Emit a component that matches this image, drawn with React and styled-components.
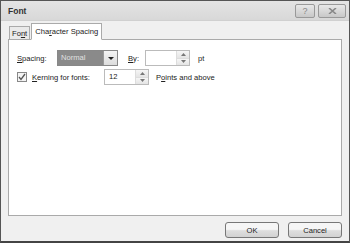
import React from 'react';
import styled, { createGlobalStyle } from 'styled-components';

const Global = createGlobalStyle`
  html, body { margin: 0; padding: 0; background: #fff; }
  body { font-family: "Liberation Sans", Arial, sans-serif; font-size: 7.6px; color: #222; }
`;

const Dialog = styled.div`
  width: 350px;
  height: 243px;
  box-sizing: border-box;
  border: 1px solid #555;
  border-bottom: 2px solid #444;
  background: #f0f0f0;
  display: flex;
  flex-direction: column;
`;

const TitleBar = styled.div`
  height: 19px;
  display: flex;
  align-items: center;
  justify-content: space-between;
  padding: 0 3px 0 7px;
  background: linear-gradient(#e4e4e4, #d8d8d8);
  border-bottom: 1px solid #d0d0d0;
`;

const Title = styled.span`
  font-weight: bold;
  font-size: 8.5px;
  color: #333;
`;

const TitleButtons = styled.div`
  display: flex;
  gap: 3px;
`;

const CapButton = styled.div`
  width: ${p => p.$w}px;
  height: 12px;
  border: 1px solid #999;
  border-radius: 2px;
  background: linear-gradient(#e8e8e8, #c8c8c8);
  display: flex;
  align-items: center;
  justify-content: center;
  font-size: 9px;
  color: #888;
`;

const Body = styled.div`
  flex: 1;
  display: flex;
  flex-direction: column;
  padding: 2px 7px 0 7px;
`;

const Tabs = styled.div`
  display: flex;
  align-items: flex-end;
  height: 17px;
  position: relative;
  z-index: 1;
  margin-bottom: -1px;
`;

const Tab = styled.div`
  box-sizing: border-box;
  padding: ${p => (p.$active ? '0 3px' : '0 2px')};
  height: ${p => (p.$active ? '17px' : '14px')};
  line-height: ${p => (p.$active ? '16px' : '13px')};
  border: 1px solid #aaa;
  border-bottom: ${p => (p.$active ? '1px solid #fff' : '1px solid #aaa')};
  background: ${p => (p.$active ? '#fff' : '#eaeaea')};
  margin-left: ${p => (p.$active ? '-1px' : '1px')};
  margin-right: ${p => (p.$active ? '0' : '2px')};
`;

const Panel = styled.div`
  height: 177px;
  box-sizing: border-box;
  background: #fff;
  border: 1px solid #aaa;
  padding: 10px 9px 10px 8px;
  display: flex;
  flex-direction: column;
  gap: 3px;
`;

const Row = styled.div`
  display: flex;
  align-items: center;
  height: 16px;
`;

const Label = styled.span`
  width: ${p => (p.$w ? `${p.$w}px` : 'auto')};
  margin-left: ${p => p.$ml || 0}px;
  flex-shrink: 0;
`;

const Select = styled.div`
  width: 61px;
  height: 16px;
  box-sizing: border-box;
  border: 1px solid #888;
  display: flex;
  background: #8a8a8a;
`;

const SelectText = styled.div`
  flex: 1;
  color: #e0e0e0;
  padding-left: 3px;
  line-height: 14px;
`;

const DropButton = styled.div`
  width: 13px;
  background: linear-gradient(#f4f4f4, #dcdcdc);
  border-left: 1px solid #999;
  display: flex;
  align-items: center;
  justify-content: center;
`;

const Spin = styled.div`
  width: ${p => p.$w}px;
  height: 16px;
  box-sizing: border-box;
  border: 1px solid #bbb;
  display: flex;
  margin-left: ${p => p.$ml || 0}px;
`;

const SpinText = styled.div`
  flex: 1;
  padding-left: 4px;
  line-height: 14px;
`;

const SpinArrows = styled.div`
  width: 12px;
  display: flex;
  flex-direction: column;
  border-left: 1px solid #ddd;
`;

const SpinHalf = styled.div`
  flex: 1;
  background: linear-gradient(#f6f6f6, #e4e4e4);
  display: flex;
  align-items: center;
  justify-content: center;
  & + & { border-top: 1px solid #ddd; }
`;

const Check = styled.div`
  width: 10px;
  height: 10px;
  box-sizing: border-box;
  border: 1px solid #888;
  background: #f4f4f4;
  display: flex;
  align-items: center;
  justify-content: center;
  margin-right: 5px;
`;

const Footer = styled.div`
  display: flex;
  justify-content: flex-end;
  gap: 9px;
  padding: 6px 0 0 0;
`;

const Button = styled.div`
  width: 54px;
  height: 16px;
  box-sizing: border-box;
  border: 1px solid #777;
  border-radius: 3px;
  background: linear-gradient(#f6f6f6 45%, #dedede 55%, #d2d2d2);
  display: flex;
  align-items: center;
  justify-content: center;
`;

const U = styled.span`
  text-decoration: underline;
`;

const Tri = ({ up }) => (
  <svg width="5" height="3" viewBox="0 0 5 3">
    <path d={up ? 'M0 3 L2.5 0 L5 3 Z' : 'M0 0 L2.5 3 L5 0 Z'} fill="#777" />
  </svg>
);

const SpinBox = ({ w, ml, value }) => (
  <Spin $w={w} $ml={ml}>
    <SpinText>{value}</SpinText>
    <SpinArrows>
      <SpinHalf><Tri up /></SpinHalf>
      <SpinHalf><Tri /></SpinHalf>
    </SpinArrows>
  </Spin>
);

export default function App() {
  return (
    <>
      <Global />
      <Dialog>
        <TitleBar>
          <Title>Font</Title>
          <TitleButtons>
            <CapButton $w={18}>?</CapButton>
            <CapButton $w={26}>
              <svg width="9" height="6" viewBox="0 0 9 6">
                <path d="M1 0 L8 6 M8 0 L1 6" stroke="#888" strokeWidth="1.6" />
              </svg>
            </CapButton>
          </TitleButtons>
        </TitleBar>
        <Body>
          <Tabs>
            <Tab>Fo<U>n</U>t</Tab>
            <Tab $active>Cha<U>r</U>acter Spacing</Tab>
          </Tabs>
          <Panel>
            <Row>
              <Label $w={40}><U>S</U>pacing:</Label>
              <Select>
                <SelectText>Normal</SelectText>
                <DropButton>
                  <svg width="6" height="3" viewBox="0 0 6 3">
                    <path d="M0 0 L3 3 L6 0 Z" fill="#222" />
                  </svg>
                </DropButton>
              </Select>
              <Label $w={17} $ml={10}><U>B</U>y:</Label>
              <SpinBox w={45} value="" />
              <Label $ml={8}>pt</Label>
            </Row>
            <Row>
              <Check>
                <svg width="8" height="8" viewBox="0 0 8 8">
                  <path d="M1 4 L3 6.5 L7 1" stroke="#555" strokeWidth="1.3" fill="none" />
                </svg>
              </Check>
              <Label $w={72}><U>K</U>erning for fonts:</Label>
              <SpinBox w={45} value="12" />
              <Label $ml={7}>P<U>o</U>ints and above</Label>
            </Row>
          </Panel>
          <Footer>
            <Button>OK</Button>
            <Button>Cancel</Button>
          </Footer>
        </Body>
      </Dialog>
    </>
  );
}
